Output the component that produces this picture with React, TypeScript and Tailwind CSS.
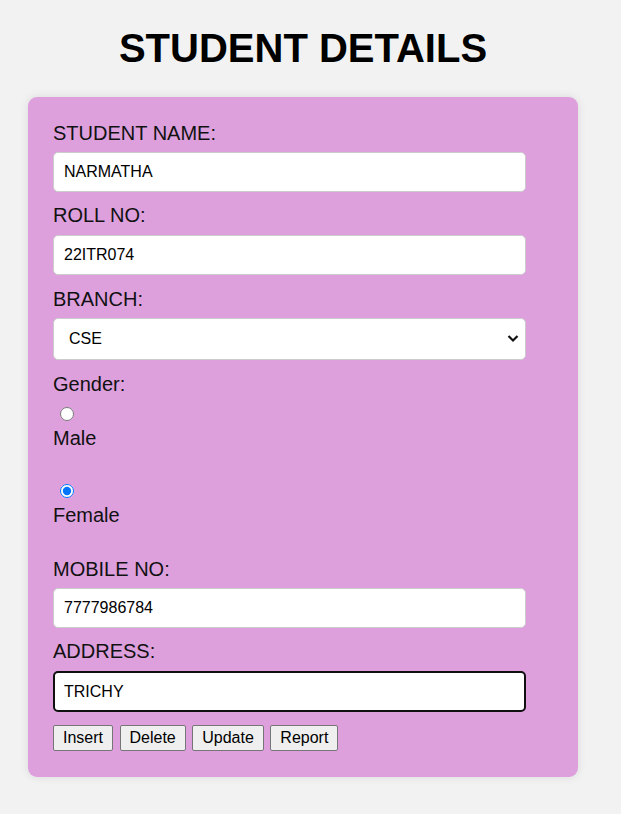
import React from "react";

const inputCls =
  "block w-[473px] h-[40px] px-[10px] bg-white border border-[#cccccc] rounded-[5px] text-[16px] text-black outline-none";

export default function App() {
  return (
    <div
      className="min-h-screen bg-[#f2f2f2] text-[#111]"
      style={{ fontFamily: '"Liberation Sans", Arial, sans-serif' }}
    >
      <div className="ml-[28px] w-[550px] pt-[25px]">
        <h1 className="text-center text-[40px] leading-[46px] font-bold text-black">
          STUDENT DETAILS
        </h1>
        <div className="mt-[26px] bg-[#dda0dd] rounded-[9px] px-[25px] pt-[25px] pb-[26px] shadow-[0_0_10px_rgba(0,0,0,0.1)] flex flex-col items-start">
          <label className="block text-[20px] leading-[23px] mb-[7px]">STUDENT NAME:</label>
          <input className={inputCls} defaultValue="NARMATHA" />
          <label className="block text-[20px] leading-[23px] mt-[12px] mb-[8px]">ROLL NO:</label>
          <input className={inputCls} defaultValue="22ITR074" />
          <label className="block text-[20px] leading-[23px] mt-[13px] mb-[7px]">BRANCH:</label>
          <div className="relative">
            <select
              className="block appearance-none w-[473px] h-[42px] pl-[15px] pr-[30px] bg-white border border-[#cccccc] rounded-[5px] text-[16px] text-black outline-none"
              defaultValue="CSE"
            >
              <option>CSE</option>
              <option>IT</option>
              <option>ECE</option>
            </select>
            <svg
              className="absolute right-[7px] top-[16px] pointer-events-none"
              width="12"
              height="9"
              viewBox="0 0 12 9"
            >
              <path d="M1.5 2 L6 6.5 L10.5 2" fill="none" stroke="#111" strokeWidth="2.2" />
            </svg>
          </div>
          <label className="block text-[20px] leading-[23px] mt-[13px]">Gender:</label>
          <input
            type="radio"
            name="gender"
            className="block w-[14px] h-[14px] mt-[11px] ml-[7px]"
          />
          <label className="block text-[20px] leading-[23px] mt-[6px]">Male</label>
          <input
            type="radio"
            name="gender"
            defaultChecked
            className="block w-[14px] h-[14px] mt-[34px] ml-[7px]"
          />
          <label className="block text-[20px] leading-[23px] mt-[6px]">Female</label>
          <label className="block text-[20px] leading-[23px] mt-[31px] mb-[7px]">MOBILE NO:</label>
          <input className={inputCls} defaultValue="7777986784" />
          <label className="block text-[20px] leading-[23px] mt-[12px] mb-[8px]">ADDRESS:</label>
          <input
            className="block w-[473px] h-[41px] px-[9px] bg-white border-2 border-[#101010] rounded-[5px] text-[16px] text-black outline-none"
            defaultValue="TRICHY"
          />
          <div className="flex gap-[6.5px] mt-[13px]">
            {["Insert", "Delete", "Update", "Report"].map((b) => (
              <button
                key={b}
                className="h-[26px] px-[9px] bg-[#efefef] border border-[#767676] rounded-[2px] text-[16px] leading-[18px] text-black"
              >
                {b}
              </button>
            ))}
          </div>
        </div>
      </div>
    </div>
  );
}
